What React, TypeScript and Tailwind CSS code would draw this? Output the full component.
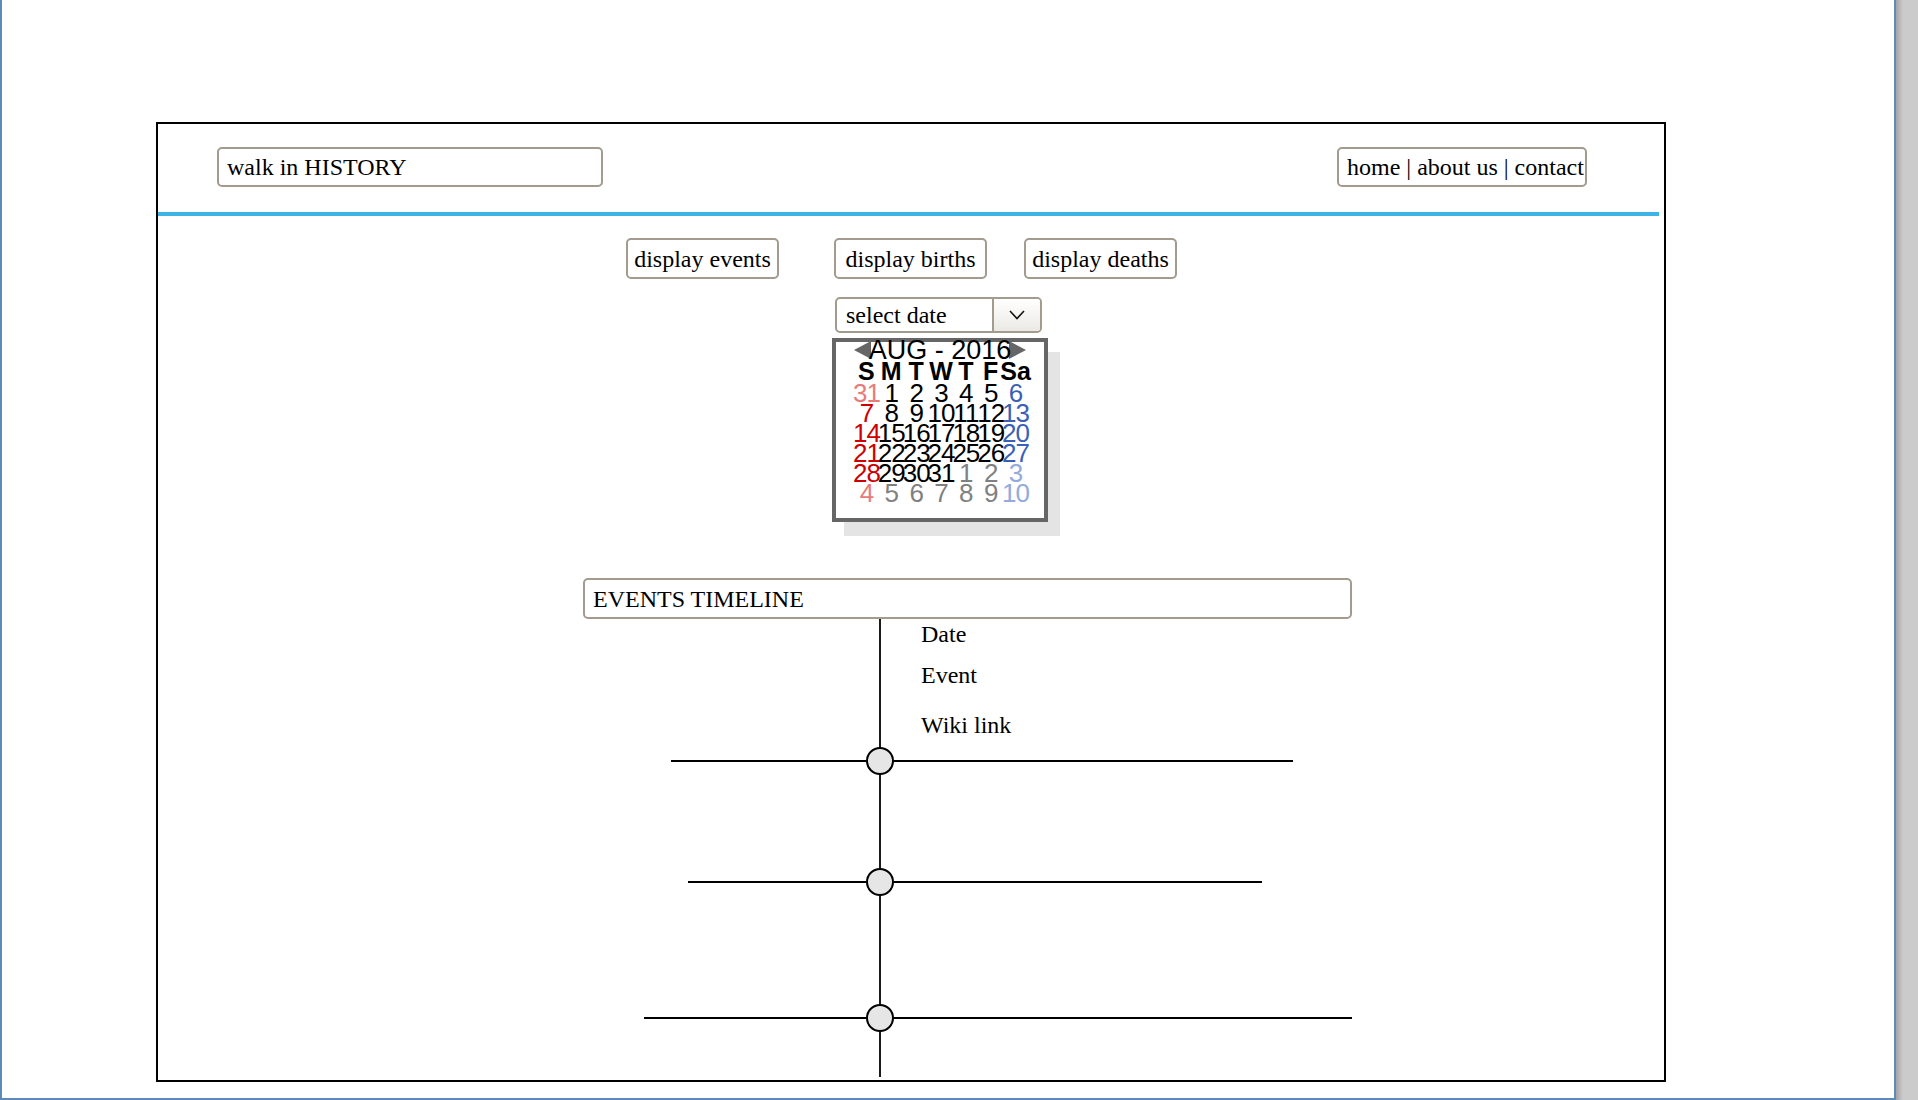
import React from "react";

const serif = "font-['Liberation_Serif',_'Times_New_Roman',_serif]";
const sans = "font-['Liberation_Sans',_Arial,_sans-serif]";
const box = "border-2 border-[#a39b8e] rounded-[5px] bg-white text-black";

type Day = { n: number; tone: string };

const RED = "text-[#cc0000]";
const PINK = "text-[#e77b7b]";
const BLUE = "text-[#3b5fb6]";
const LBLUE = "text-[#93abdc]";
const GRAY = "text-[#808080]";
const BLACK = "text-black";

function buildWeeks(): Day[][] {
  const rows: number[][] = [
    [31, 1, 2, 3, 4, 5, 6],
    [7, 8, 9, 10, 11, 12, 13],
    [14, 15, 16, 17, 18, 19, 20],
    [21, 22, 23, 24, 25, 26, 27],
    [28, 29, 30, 31, 1, 2, 3],
    [4, 5, 6, 7, 8, 9, 10],
  ];
  return rows.map((row, r) =>
    row.map((n, c) => {
      const outside = (r === 0 && n > 7) || (r >= 4 && n < 15);
      let tone = BLACK;
      if (c === 0) tone = outside ? PINK : RED;
      else if (c === 6) tone = outside ? LBLUE : BLUE;
      else if (outside) tone = GRAY;
      return { n, tone };
    })
  );
}

function Calendar() {
  const weeks = buildWeeks();
  const heads = ["S", "M", "T", "W", "T", "F", "Sa"];
  return (
    <div className="relative w-[216px] h-[184px] border-4 border-[#666666] bg-white shadow-[12px_14px_0_0_#e4e4e4]">
      <div className={`relative z-10 -mt-[2px] flex h-[20px] items-center justify-center ${sans}`}>
        <svg width="17" height="18" viewBox="0 0 17 18" className="-mr-[2px]">
          <polygon points="17,0 0,9 17,18" fill="#666666" />
        </svg>
        <span className="relative text-[27px] leading-[20px] text-black">AUG - 2016</span>
        <svg width="17" height="18" viewBox="0 0 17 18" className="-ml-[2px]">
          <polygon points="0,0 17,9 0,18" fill="#666666" />
        </svg>
      </div>
      <div className={`ml-[18px] mt-[1px] grid w-[174px] grid-cols-7 ${sans}`}>
        {heads.map((h, i) => (
          <span key={i} className="flex h-[23px] justify-center whitespace-nowrap text-[25px] font-bold leading-[20px] text-black">
            {h}
          </span>
        ))}
      </div>
      <div className={`ml-[18px] -mt-[1px] grid w-[174px] grid-cols-7 ${sans}`}>
        {weeks.flat().map((d, i) => (
          <span
            key={i}
            className={`flex h-[20px] justify-center whitespace-nowrap text-[26px] leading-[20px] tracking-[-1px] ${d.tone}`}
          >
            {d.n}
          </span>
        ))}
      </div>
    </div>
  );
}

function TimelineRow({ start, left, right }: { start: number; left: number; right: number }) {
  return (
    <div className="flex h-[28px] items-center" style={{ marginLeft: start }}>
      <div className="h-[2px] bg-black" style={{ width: left }} />
      <div className="relative z-10 h-[28px] w-[28px] rounded-full border-2 border-black bg-[#e6e6e6]" />
      <div className="h-[2px] bg-black" style={{ width: right }} />
    </div>
  );
}

export default function App() {
  return (
    <div className="flex h-[1100px] w-[1918px] overflow-hidden bg-white">
      <div className="h-[1100px] w-[1896px] border-b-2 border-l-2 border-r-2 border-[#5d8ab8] bg-white pl-[154px] pt-[122px]">
        <div className={`flex h-[960px] w-[1510px] flex-col border-2 border-black ${serif}`}>
          <header className="flex h-[88px] items-start justify-between pl-[59px] pr-[77px] pt-[23px] text-[24px]">
            <div className={`${box} flex h-[40px] w-[386px] items-center px-[8px]`}>walk in HISTORY</div>
            <nav className={`${box} flex h-[40px] w-[250px] items-center whitespace-nowrap px-[8px]`}>
              home | about us | contact
            </nav>
          </header>
          <div className="mr-[5px] h-[4px] bg-[#3db4e5]" />

          <div className="mt-[22px] flex pl-[468px] text-[24px]">
            <button className={`${box} flex h-[41px] w-[153px] items-center justify-center`}>display events</button>
            <button className={`${box} ml-[55px] flex h-[41px] w-[153px] items-center justify-center`}>display births</button>
            <button className={`${box} ml-[37px] flex h-[41px] w-[153px] items-center justify-center`}>display deaths</button>
          </div>

          <div className="mt-[18px] flex flex-col pl-[674px]">
            <div className={`${box} ml-[3px] flex h-[36px] w-[207px] overflow-hidden text-[24px]`}>
              <span className="flex flex-1 items-center pl-[9px]">select date</span>
              <span className="flex w-[48px] items-center justify-center border-l-2 border-[#a39b8e] bg-[linear-gradient(#ffffff,#ebe9e5)]">
                <svg width="16" height="10" viewBox="0 0 16 10">
                  <polyline points="1,1 8,8.5 15,1" fill="none" stroke="#111" strokeWidth="1.6" />
                </svg>
              </span>
            </div>
            <div className="mt-[5px]">
              <Calendar />
            </div>
          </div>

          <div className={`${box} ml-[425px] mt-[56px] flex h-[41px] w-[769px] items-center px-[8px] text-[24px]`}>
            EVENTS TIMELINE
          </div>

          <div className="relative ml-[425px] flex-1">
            <div className="absolute bottom-[3px] left-[296px] top-0 w-[2px] bg-[#1a1a1a]" />
            <div className="flex flex-col pl-[338px] text-[24px] leading-[26px] text-black">
              <span className="mt-[2px]">Date</span>
              <span className="mt-[15px]">Event</span>
              <span className="mt-[24px]">Wiki link</span>
            </div>
            <div className="mt-[9px]">
              <TimelineRow start={88} left={195} right={399} />
            </div>
            <div className="mt-[93px]">
              <TimelineRow start={105} left={178} right={368} />
            </div>
            <div className="mt-[108px]">
              <TimelineRow start={61} left={222} right={458} />
            </div>
          </div>
        </div>
      </div>
      <div className="h-[1100px] flex-1 bg-[linear-gradient(to_right,#a3a3a3,#cbcbcb_7px,#cbcbcb)]" />
    </div>
  );
}
